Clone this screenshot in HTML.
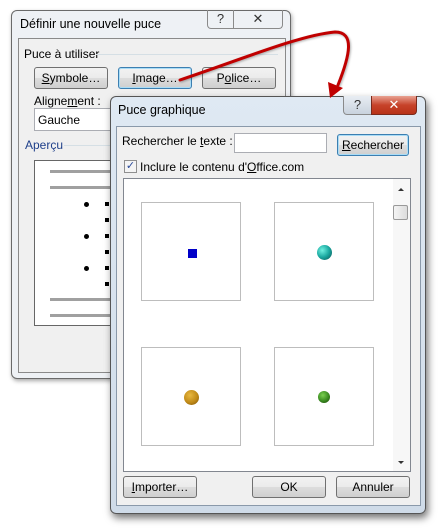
<!DOCTYPE html>
<html><head><meta charset="utf-8"><style>
*{margin:0;padding:0;box-sizing:border-box}
body{width:441px;height:529px;background:#fff;position:relative;overflow:hidden;font-family:"Liberation Sans","DejaVu Sans",sans-serif;font-size:12px;color:#000}
.a{position:absolute}
.btn{position:absolute;height:22px;border:1px solid #707070;border-radius:3px;background:linear-gradient(#f2f2f2 0,#ebebeb 50%,#dddddd 51%,#cfcfcf 100%);text-align:center;line-height:20px;font-size:12px}
.btn.f{border-color:#3c7fb1;box-shadow:inset 0 0 0 1px #a9dcf6}
.win{position:absolute;border:1px solid #555;border-radius:6px;background:linear-gradient(#dfe9f3,#cfdbe8)}
.pan{position:absolute;background:#f0f0f0;border:1px solid #8a99aa}
.cap{position:absolute;border:1px solid #8a8a8a;border-top:none;height:19px;text-align:center;line-height:17px;color:#333;font-size:13px}
.cell{position:absolute;width:100px;height:99px;border:1px solid #bdbdbd;background:#fff}
u{text-decoration:underline}
</style></head><body>
<!-- back dialog -->
<div class="win" style="left:11px;top:10px;width:280px;height:369px;background:#eef1f5;border-color:#6a6a6a;box-shadow:1px 2px 4px rgba(0,0,0,.35)"></div>
<div class="a" style="left:20px;top:17px;font-size:12.5px">Définir une nouvelle puce</div>
<div class="cap" style="left:207px;top:10px;width:27px;border-radius:0 0 0 4px">?</div>
<div class="cap" style="left:233px;top:10px;width:50px;border-radius:0 0 4px 0">✕</div>
<div class="a" style="left:18px;top:38px;width:268px;height:335px;background:#f0f0f0;border:1px solid #8a8a8a"></div>
<div class="a" style="left:24px;top:47px">Puce à utiliser</div>
<div class="a" style="left:96px;top:54px;width:182px;height:1px;background:#d5dfe5"></div>
<div class="btn" style="left:34px;top:67px;width:74px"><u>S</u>ymbole…</div>
<div class="btn f" style="left:118px;top:67px;width:74px"><u>I</u>mage…</div>
<div class="btn" style="left:202px;top:67px;width:74px">P<u>o</u>lice…</div>
<div class="a" style="left:34px;top:94px">Aligne<u>m</u>ent :</div>
<div class="a" style="left:34px;top:108px;width:90px;height:23px;border:1px solid #abadb3;background:#fff;padding:4px 3px">Gauche</div>
<div class="a" style="left:25px;top:138px;color:#1e3f8a">Aperçu</div>
<div class="a" style="left:64px;top:145px;width:214px;height:1px;background:#d5dfe5"></div>
<div class="a" style="left:34px;top:160px;width:100px;height:166px;border:1px solid #666;background:#fff"></div>
<div class="a" style="left:50px;top:170px;width:70px;height:3px;background:#a0a0a0"></div>
<div class="a" style="left:50px;top:186px;width:70px;height:3px;background:#a0a0a0"></div>
<div class="a" style="left:50px;top:298px;width:70px;height:3px;background:#a0a0a0"></div>
<div class="a" style="left:50px;top:314px;width:70px;height:3px;background:#a0a0a0"></div>
<div class="a" style="left:84px;top:202px;width:5px;height:5px;border-radius:50%;background:#000"></div>
<div class="a" style="left:84px;top:234px;width:5px;height:5px;border-radius:50%;background:#000"></div>
<div class="a" style="left:84px;top:266px;width:5px;height:5px;border-radius:50%;background:#000"></div>
<div class="a" style="left:105px;top:202px;width:4px;height:4px;background:#000"></div>
<div class="a" style="left:105px;top:218px;width:4px;height:4px;background:#000"></div>
<div class="a" style="left:105px;top:234px;width:4px;height:4px;background:#000"></div>
<div class="a" style="left:105px;top:250px;width:4px;height:4px;background:#000"></div>
<div class="a" style="left:105px;top:266px;width:4px;height:4px;background:#000"></div>
<div class="a" style="left:105px;top:282px;width:4px;height:4px;background:#000"></div>
<!-- front dialog -->
<div class="win" style="left:110px;top:96px;width:316px;height:418px;box-shadow:2px 4px 8px rgba(0,0,0,.55)"></div>
<div class="a" style="left:118px;top:103px;font-size:12.5px">Puce graphique</div>
<div class="cap" style="left:343px;top:96px;width:29px;border-radius:0 0 0 4px;background:linear-gradient(#e8edf3,#c9d3de)">?</div>
<div class="cap" style="left:371px;top:96px;width:46px;border-radius:0 0 4px 0;background:linear-gradient(#e8a192,#c7432a 50%,#b83218);color:#fff;font-weight:bold;border-color:#7a2a1c">✕</div>
<div class="pan" style="left:116px;top:126px;width:305px;height:380px"></div>
<div class="a" style="left:122px;top:134px">Rechercher le <u>t</u>exte :</div>
<div class="a" style="left:234px;top:133px;width:93px;height:20px;border:1px solid #abadb3;background:#fff"></div>
<div class="btn f" style="left:337px;top:134px;width:72px"><u>R</u>echercher</div>
<div class="a" style="left:124px;top:160px;width:13px;height:13px;border:1px solid #8f8f8f;background:#f4f4f4;color:#2a4a9a;font-size:11px;line-height:11px;text-align:center">✓</div>
<div class="a" style="left:140px;top:160px">Inclure le contenu d'<u>O</u>ffice.com</div>
<div class="a" style="left:123px;top:178px;width:288px;height:294px;border:1px solid #828790;background:#fff"></div>
<div class="a" style="left:393px;top:179px;width:17px;height:292px;background:#f7f7f7"></div>
<div class="a" style="left:398px;top:188px;width:0;height:0;border-left:3px solid transparent;border-right:3px solid transparent;border-bottom:3px solid #333"></div>
<div class="a" style="left:398px;top:461px;width:0;height:0;border-left:3px solid transparent;border-right:3px solid transparent;border-top:3px solid #333"></div>
<div class="a" style="left:393px;top:205px;width:15px;height:15px;border:1px solid #999;border-radius:2px;background:linear-gradient(90deg,#f4f4f4,#dcdcdc)"></div>
<div class="cell" style="left:141px;top:202px"></div>
<div class="cell" style="left:274px;top:202px"></div>
<div class="cell" style="left:141px;top:347px"></div>
<div class="cell" style="left:274px;top:347px"></div>
<div class="a" style="left:188px;top:249px;width:9px;height:9px;background:#0000c8"></div>
<div class="a" style="left:317px;top:245px;width:15px;height:15px;border-radius:50%;background:radial-gradient(circle at 35% 35%,#6ff0e0,#1aa8a0 50%,#0a5050)"></div>
<div class="a" style="left:184px;top:390px;width:15px;height:15px;border-radius:50%;background:radial-gradient(circle at 40% 35%,#e8b840,#c08a18 55%,#7a5008)"></div>
<div class="a" style="left:318px;top:391px;width:12px;height:12px;border-radius:50%;background:radial-gradient(circle at 40% 35%,#7ad050,#3a8a20 55%,#1a4008)"></div>
<div class="btn" style="left:123px;top:476px;width:74px"><u>I</u>mporter…</div>
<div class="btn" style="left:252px;top:476px;width:74px">OK</div>
<div class="btn" style="left:336px;top:476px;width:74px">Annuler</div>
<!-- arrow -->
<svg class="a" style="left:0;top:0" width="441" height="529">
<path d="M180 80 C240 60 300 35 335 32 C355 32 350 55 338 85" fill="none" stroke="#c00000" stroke-width="3" stroke-linecap="round" style="filter:drop-shadow(1px 1px 1px rgba(0,0,0,.3))"/>
<path d="M330 98 L328 82 L343 88 Z" fill="#c00000"/>
</svg>
</body></html>
